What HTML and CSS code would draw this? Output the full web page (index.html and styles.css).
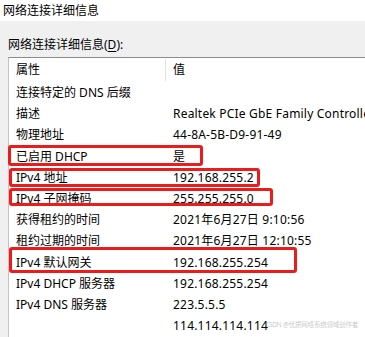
FILE: index.html
```html
<!DOCTYPE html>
<html lang="zh-CN">
<head>
    <meta charset="UTF-8">
    <meta name="viewport" content="width=device-width, initial-scale=1.0">
    <title>网络连接详细信息</title>
    <link rel="stylesheet" href="styles.css">
</head>
<body>
    <div class="titlebar">网络连接详细信息</div>
    <div class="panel">
        <div class="caption">网络连接详细信息(<u>D</u>):</div>
        <div class="list">
            <div class="list-head">
                <div class="col-name">属性</div>
                <div class="col-value">值</div>
            </div>
            <div class="row"><div class="col-name">连接特定的 DNS 后缀</div><div class="col-value"></div></div>
            <div class="row"><div class="col-name">描述</div><div class="col-value">Realtek PCIe GbE Family Controller</div></div>
            <div class="row"><div class="col-name">物理地址</div><div class="col-value">44-8A-5B-D9-91-49</div></div>
            <div class="row"><div class="col-name">已启用 DHCP</div><div class="col-value">是</div></div>
            <div class="row"><div class="col-name">IPv4 地址</div><div class="col-value">192.168.255.2</div></div>
            <div class="row"><div class="col-name">IPv4 子网掩码</div><div class="col-value">255.255.255.0</div></div>
            <div class="row"><div class="col-name">获得租约的时间</div><div class="col-value">2021年6月27日 9:10:56</div></div>
            <div class="row"><div class="col-name">租约过期的时间</div><div class="col-value">2021年6月27日 12:10:55</div></div>
            <div class="row"><div class="col-name">IPv4 默认网关</div><div class="col-value">192.168.255.254</div></div>
            <div class="row"><div class="col-name">IPv4 DHCP 服务器</div><div class="col-value">192.168.255.254</div></div>
            <div class="row"><div class="col-name">IPv4 DNS 服务器</div><div class="col-value">223.5.5.5</div></div>
            <div class="row"><div class="col-name"></div><div class="col-value">114.114.114.114</div></div>
        </div>
    </div>

    <!-- red annotation boxes drawn over the screenshot -->
    <div class="mark mark-dhcp"></div>
    <div class="mark mark-ip"></div>
    <div class="mark mark-mask"></div>
    <div class="mark mark-gw"></div>
    <div class="watermark">CSDN @优质网络系统领域创作者</div>
</body>
</html>
```

FILE: styles.css
```css
:root {
    --panel: #f0f0f0;
    --text: #000;
    --mark: #ec1c1c;
}
body {
    margin: 0;
    width: 365px;
    height: 337px;
    overflow: hidden;
    position: relative;
    background: #fff;
    color: var(--text);
    font-family: 'Noto Sans', 'Noto Sans CJK SC', sans-serif;
    font-size: 12px;
}
.titlebar {
    height: 21px;
    line-height: 21px;
    padding-left: 3px;
    background: #fff;
}
.panel {
    background: var(--panel);
    padding: 0 0 0 8px;
    height: 316px;
}
.caption {
    padding-top: 15px;
    height: 21px;
    line-height: 18px;
}
.caption u {
    text-decoration-thickness: 1px;
    text-underline-offset: 2px;
}
.list {
    background: #fff;
    border-top: 1px solid #8c8c8c;
    border-left: 1px solid #c4c4c4;
    width: 420px;
    height: 280px;
}
.list-head, .row {
    display: flex;
    white-space: nowrap;
}
.list-head {
    height: 24px;
    line-height: 24px;
}
.row {
    height: 21.2px;
    line-height: 21px;
}
.col-name {
    width: 149px;
    padding-left: 7px;
    overflow: hidden;
}
.col-value {
    padding-left: 7px;
    letter-spacing: 0.2px;
}
.list-head .col-value {
    border-left: 1px solid #e3e3e3;
    margin: 1px 0;
    line-height: 22px;
}
.row .col-value {
    margin-left: 1px;
}
.mark {
    position: absolute;
    border: 3px solid var(--mark);
    border-radius: 3px;
    box-sizing: border-box;
}
.mark-dhcp { left: 8px; top: 145px; width: 195px; height: 21px; }
.mark-ip { left: 9px; top: 168px; width: 251px; height: 19px; }
.mark-mask { left: 9px; top: 188px; width: 264px; height: 18px; }
.mark-gw { left: 9px; top: 247px; width: 288px; height: 26px; }
.watermark {
    position: absolute;
    left: 265px;
    top: 319px;
    font-size: 6.5px;
    letter-spacing: -0.2px;
    color: rgba(150, 150, 150, 0.55);
    white-space: nowrap;
}
```
